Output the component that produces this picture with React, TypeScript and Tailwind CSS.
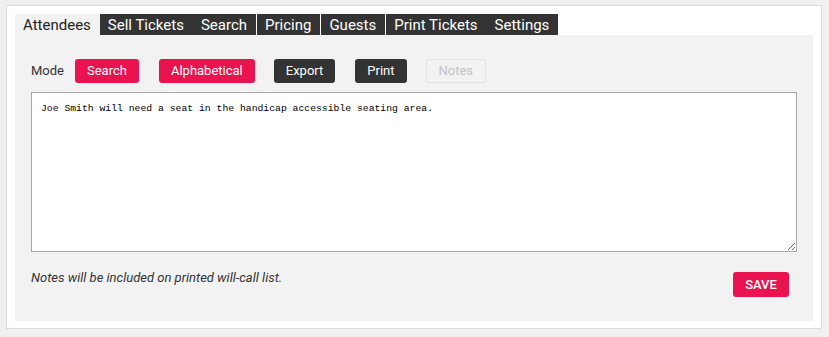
import React from "react";

const tabs = [
  { label: "Attendees", active: true, sep: false },
  { label: "Sell Tickets", active: false, sep: false },
  { label: "Search", active: false, sep: false },
  { label: "Pricing", active: false, sep: true },
  { label: "Guests", active: false, sep: true },
  { label: "Print Tickets", active: false, sep: true },
  { label: "Settings", active: false, sep: false },
];

const App: React.FC = () => {
  return (
    <div
      className="min-h-[337px] w-[829px] bg-[#f0f0f0] pt-[5px] pl-[6px]"
      style={{ fontFamily: "Roboto, 'Liberation Sans', sans-serif" }}
    >
      <div className="w-[816px] h-[324px] bg-white border border-[#dcdcdc] pt-2 px-2 pb-[7px] flex flex-col">
        <div className="flex h-[21px]">
          {tabs.map((tab) => (
            <div
              key={tab.label}
              className={
                tab.active
                  ? "pl-2 pr-[9px] pt-px h-[21px] flex items-center text-[15px] bg-[#f2f2f2] text-[#222]"
                  : tab.sep
                  ? "pl-2 pr-[9px] pt-px h-[21px] flex items-center text-[15px] bg-[#333] text-white border-l border-white"
                  : "pl-2 pr-[9px] pt-px h-[21px] flex items-center text-[15px] bg-[#333] text-white"
              }
            >
              {tab.label}
            </div>
          ))}
        </div>

        <div className="flex-1 bg-[#f2f2f2] px-4 pt-6 pb-6">
          <div className="flex items-center h-6 text-[13px]">
            <span className="text-[#333] mr-[11px]">Mode</span>
            <button className="h-6 px-3 rounded-[3px] bg-[#e9134f] text-white mr-5">
              Search
            </button>
            <button className="h-6 px-3 rounded-[3px] bg-[#e9134f] text-white mr-[19px]">
              Alphabetical
            </button>
            <button className="h-6 px-3 rounded-[3px] bg-[#333] text-white mr-5">
              Export
            </button>
            <button className="h-6 px-3 rounded-[3px] bg-[#333] text-white mr-[19px]">
              Print
            </button>
            <button
              disabled
              className="h-6 px-3 rounded-[3px] bg-[#f2f2f2] border border-[#e2e2e2] text-[#c4c4c4]"
            >
              Notes
            </button>
          </div>

          <textarea
            className="mt-[9px] block w-[766px] h-[160px] bg-white border border-[#a9a9a9] pl-[9px] pr-2 py-[9px] text-[9.75px] leading-[14px] text-black outline-none"
            style={{ fontFamily: "'Liberation Mono', 'DejaVu Sans Mono', monospace" }}
            defaultValue="Joe Smith will need a seat in the handicap accessible seating area."
          />

          <div className="flex justify-between items-start mt-[18px] pr-2">
            <p className="italic text-[13px] text-[#333] leading-4">
              Notes will be included on printed will-call list.
            </p>
            <button className="mt-[2px] h-[25px] w-[56px] rounded-[3px] bg-[#e9134f] text-white text-[13px] font-medium">
              SAVE
            </button>
          </div>
        </div>
      </div>
    </div>
  );
};

export default App;
